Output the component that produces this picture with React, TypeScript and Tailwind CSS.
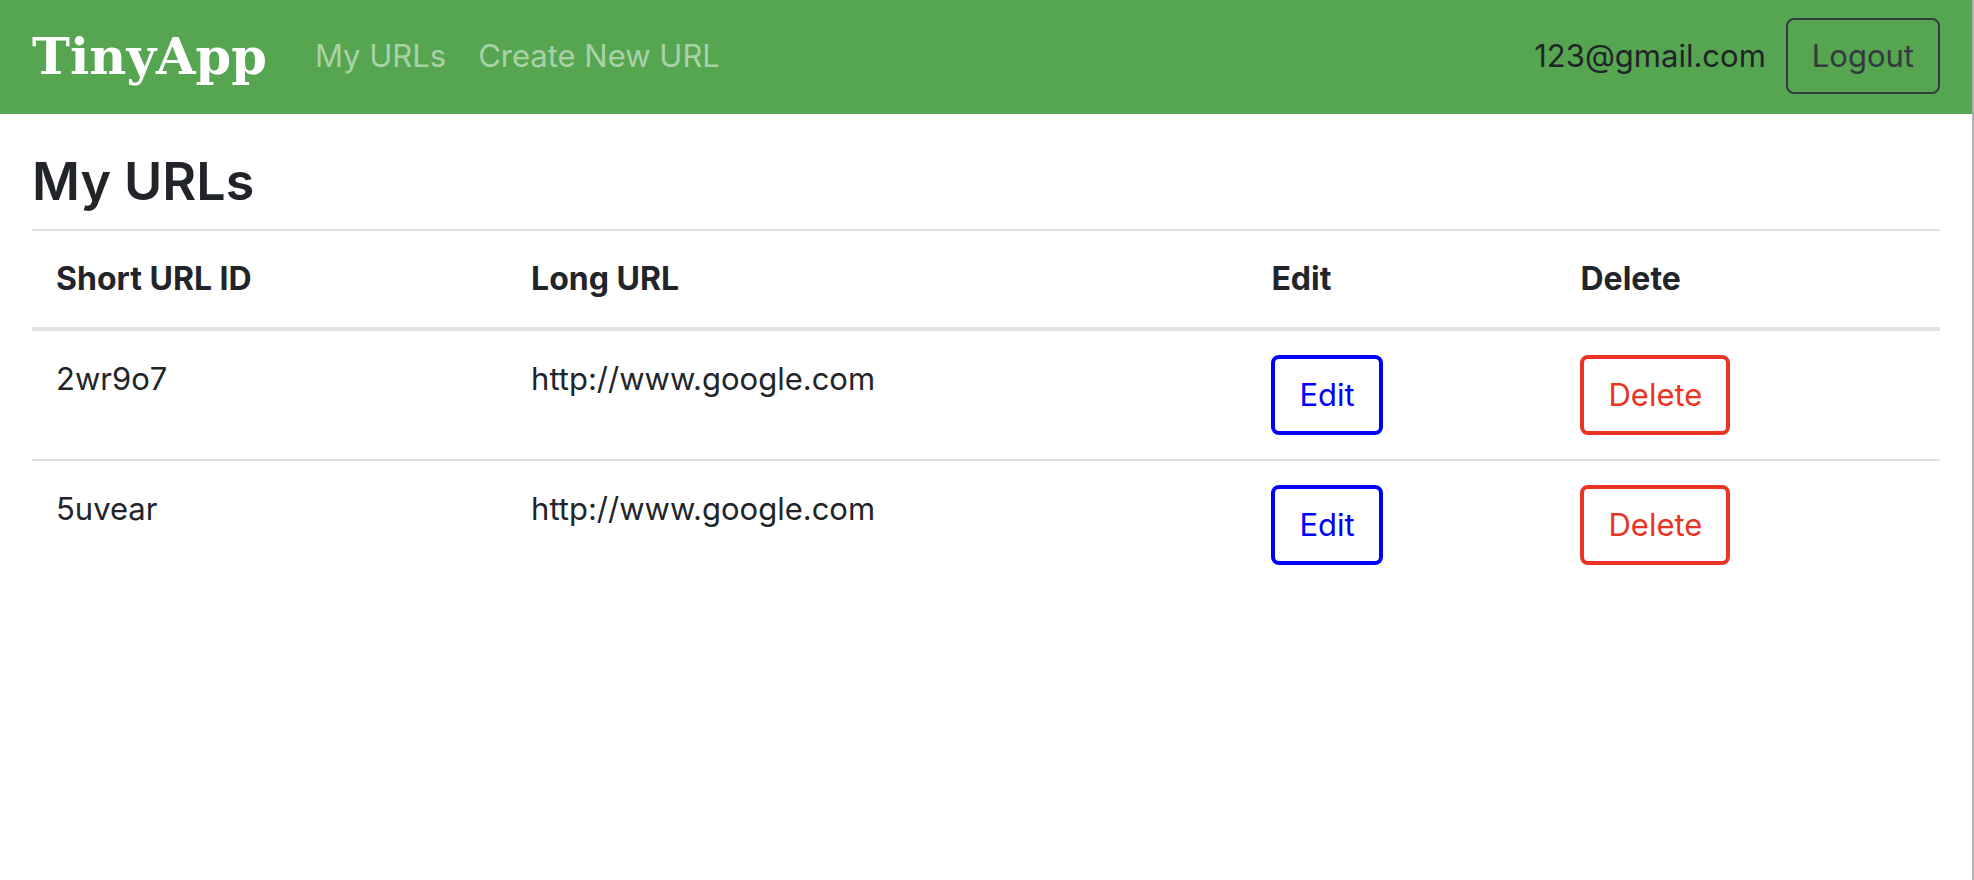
const rows = [
  { id: "2wr9o7", url: "http://www.google.com" },
  { id: "5uvear", url: "http://www.google.com" },
];

const columns = [
  { label: "Short URL ID", width: "w-[24.9%]" },
  { label: "Long URL", width: "w-[38.8%]" },
  { label: "Edit", width: "w-[16.2%]" },
  { label: "Delete", width: "w-[20.1%]" },
];

export default function App() {
  return (
    <div className="min-h-screen border-r-2 border-[#b0aeb0] bg-white font-['Inter',sans-serif] text-[31px] leading-[48px] text-[#212529]">
      <header className="flex items-center justify-between bg-[#55a551] px-8 pt-[18px] pb-5">
        <nav className="flex items-center gap-8">
          <a href="#" className="mr-4 font-['DejaVu_Serif',serif] text-[51px] leading-[76px] font-bold text-white">
            TinyApp
          </a>
          <a href="#urls" className="text-white/50">My URLs</a>
          <a href="#new" className="text-white/50">Create New URL</a>
        </nav>
        <form className="flex items-center gap-5" onSubmit={(e) => e.preventDefault()}>
          <span>123@gmail.com</span>
          <button type="submit" className="rounded-lg border-2 border-[#343a40] px-6 py-3 text-[#343a40]">
            Logout
          </button>
        </form>
      </header>
      <main className="px-8 pt-[34px]">
        <h3 className="mb-3.5 text-[52px] leading-[67px] font-semibold">My URLs</h3>
        <table className="w-full table-fixed border-separate border-spacing-0 text-left">
          <thead>
            <tr>
              {columns.map((c) => (
                <th key={c.label} scope="col" className={`${c.width} border-t-2 border-b-4 border-[#dee2e6] p-6 text-[32px] leading-[48px] font-bold`}>
                  {c.label}
                </th>
              ))}
            </tr>
          </thead>
          <tbody className="[&>tr+tr>td]:border-t-2">
            {rows.map((r) => (
              <tr key={r.id}>
                <td className="border-[#dee2e6] p-6 align-top">{r.id}</td>
                <td className="border-[#dee2e6] p-6 align-top">{r.url}</td>
                <td className="border-[#dee2e6] p-6 align-top">
                  <button type="button" className="block rounded-lg border-4 border-[#0000ff] px-6 py-3 text-[#0000ff]">Edit</button>
                </td>
                <td className="border-[#dee2e6] p-6 align-top">
                  <button type="button" className="block rounded-lg border-4 border-[#eb3323] px-6 py-3 text-[#eb3323]">Delete</button>
                </td>
              </tr>
            ))}
          </tbody>
        </table>
      </main>
    </div>
  );
}
